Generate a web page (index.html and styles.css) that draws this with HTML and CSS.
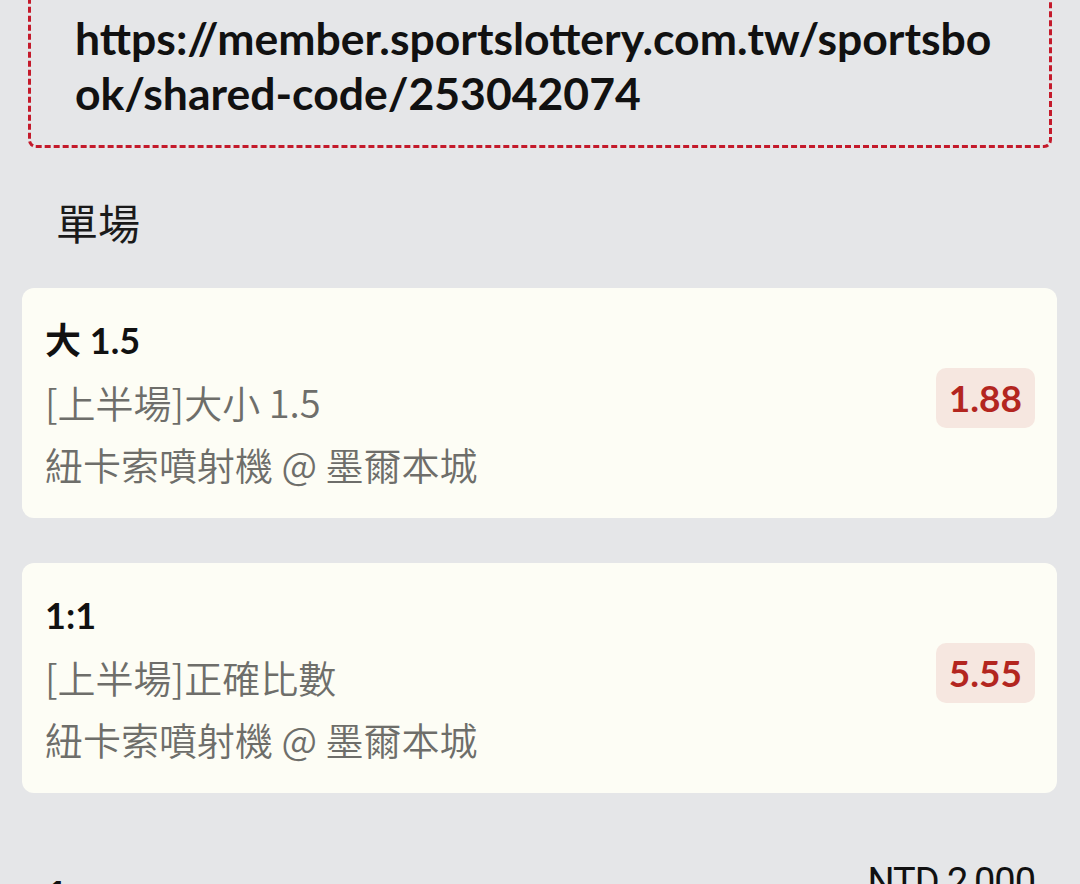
FILE: index.html
```html
<!DOCTYPE html>
<html lang="zh-Hant">
<head>
<meta charset="utf-8">
<title>單場</title>
<link rel="stylesheet" href="styles.css">
</head>
<body>
<div class="page">
  <div class="share-box">
    <p class="share-url">https://member.sportslottery.com.tw/sportsbook/shared-code/253042074</p>
  </div>

  <h2 class="section-title">單場</h2>

  <div class="bet-card">
    <div class="bet-info">
      <div class="bet-pick">大 1.5</div>
      <div class="bet-market">[上半場]大小 1.5</div>
      <div class="bet-match">紐卡索噴射機 @ 墨爾本城</div>
    </div>
    <div class="odds">1.88</div>
  </div>

  <div class="bet-card">
    <div class="bet-info">
      <div class="bet-pick">1:1</div>
      <div class="bet-market">[上半場]正確比數</div>
      <div class="bet-match">紐卡索噴射機 @ 墨爾本城</div>
    </div>
    <div class="odds">5.55</div>
  </div>

  <div class="summary-row">
    <div class="summary-label">1</div>
    <div class="summary-amount">NTD 2,000</div>
  </div>
</div>
</body>
</html>
```
FILE: styles.css
```css
html, body {
  margin: 0;
  padding: 0;
}
body {
  background: #e5e6e8;
  font-family: "Lato", "Noto Sans CJK TC", sans-serif;
  color: #111;
  overflow: hidden;
}
.page {
  padding: 0 23px 0 22px;
}
.share-box {
  margin: -30px 5px 0 6px;
  padding: 37px 45px 25px 44px;
  border: 3px dashed #c41a2b;
  border-radius: 8px;
}
.share-url {
  margin: 0;
  font-size: 44.5px;
  font-weight: 700;
  line-height: 55px;
  color: #111;
  word-break: break-all;
}
.section-title {
  margin: 44px 0 36px 34px;
  font-family: "Noto Sans CJK TC", sans-serif;
  font-weight: 400;
  font-size: 42px;
  line-height: 60px;
  color: #1a1a1a;
}
.bet-card {
  display: flex;
  align-items: center;
  justify-content: space-between;
  background: #fdfdf5;
  border-radius: 12px;
  padding: 21px 22px 23px 23px;
  margin-bottom: 45px;
}
.bet-info {
  display: flex;
  flex-direction: column;
}
.bet-pick {
  font-family: "Lato", "Noto Sans CJK TC", sans-serif;
  font-weight: 700;
  font-size: 36px;
  line-height: 62px;
  color: #111;
}
.bet-market,
.bet-match {
  font-family: "Noto Sans CJK TC", sans-serif;
  font-weight: 350;
  font-size: 38px;
  line-height: 62px;
  color: #6e6e6a;
}
.odds {
  margin-bottom: 8px;
  padding: 0 13px;
  height: 60px;
  line-height: 60px;
  border-radius: 10px;
  background: #f6e7e0;
  color: #b3261f;
  font-weight: 700;
  font-size: 37px;
}
.summary-row {
  display: flex;
  justify-content: space-between;
  align-items: flex-start;
  padding: 0 22px 0 23px;
  margin-top: 64px;
}
.summary-label {
  margin-top: 13px;
  font-family: "Lato", sans-serif;
  font-weight: 900;
  font-size: 40px;
  line-height: 50px;
  color: #111;
}
.summary-amount {
  font-family: "Roboto", sans-serif;
  font-weight: 400;
  font-size: 38px;
  line-height: 50px;
  color: #111;
  letter-spacing: -1px;
}
```
